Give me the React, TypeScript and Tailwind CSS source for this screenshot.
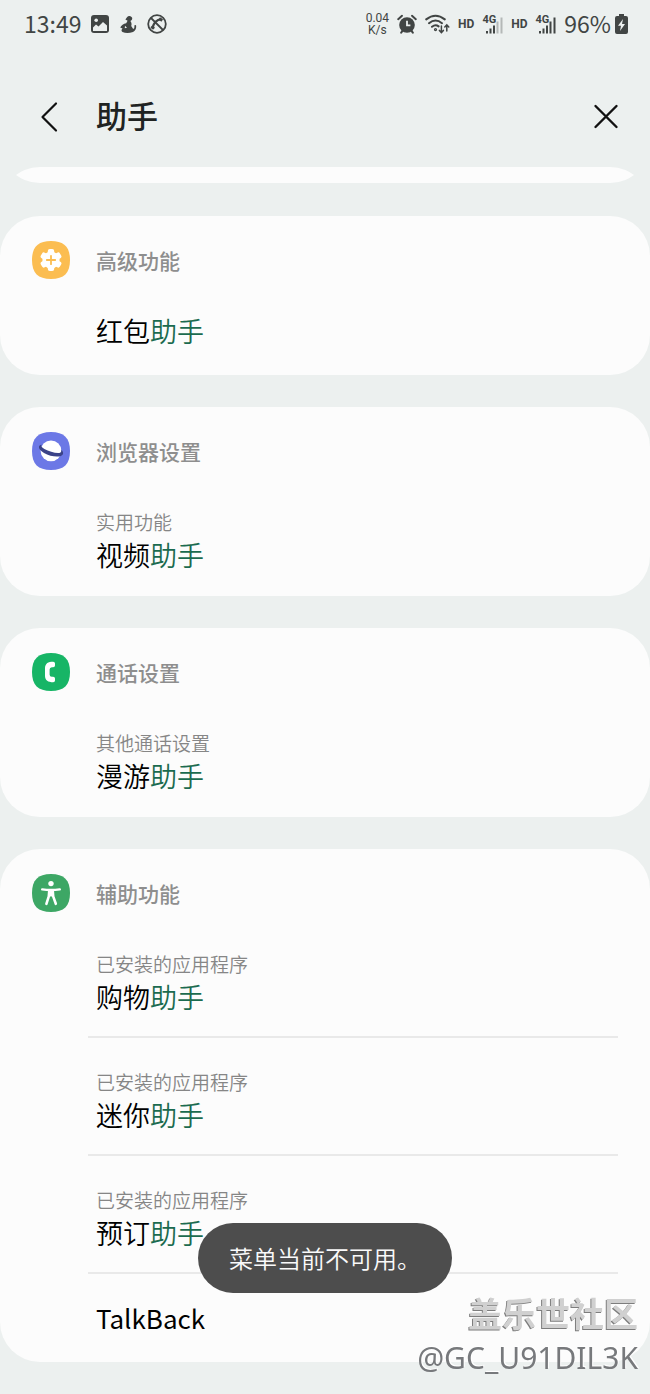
import React from 'react';

type Entry = {
  path?: string;
  name: string;
  match?: string;
};

type Section = {
  title: string;
  icon: React.ReactNode;
  entries: Entry[];
};

const tilePath =
  'M19 0C32 0 38 6 38 19S32 38 19 38S0 32 0 19S6 0 19 0Z';

const AdvancedIcon = () => (
  <svg viewBox="0 0 38 38" className="size-[38px] shrink-0" aria-hidden="true">
    <path d={tilePath} fill="#fbbd51" />
    <g fill="#fff">
      <circle cx="19" cy="19" r="8.6" />
      <rect x="15.8" y="8" width="6.4" height="22" rx="2" />
      <rect x="15.8" y="8" width="6.4" height="22" rx="2" transform="rotate(60 19 19)" />
      <rect x="15.8" y="8" width="6.4" height="22" rx="2" transform="rotate(120 19 19)" />
    </g>
    <path d="M19 14.8v8.4M14.8 19h8.4" stroke="#fbbd51" strokeWidth="1.8" strokeLinecap="round" />
  </svg>
);

const BrowserIcon = () => (
  <svg viewBox="0 0 38 38" className="size-[38px] shrink-0" aria-hidden="true">
    <path d={tilePath} fill="#6c78e6" />
    <circle cx="19" cy="18.8" r="10.4" fill="#fff" />
    <path
      d="M9.6 12.8C5.6 13.2 6 17.4 12 21C18.4 24.7 28 26 30.6 22.8C31.8 21.1 30.8 19.2 29.2 17.6C29.6 19.6 29.2 20.6 27.4 20.9C23.6 21.4 16.6 19.4 12.4 17C9.6 15.3 8.6 14 9.6 12.8Z"
      fill="#3b4388"
    />
  </svg>
);

const CallIcon = () => (
  <svg viewBox="0 0 38 38" className="size-[38px] shrink-0" aria-hidden="true">
    <path d={tilePath} fill="#17b566" />
    <path
      d="M19.4 8.8C14.6 9.2 13 12 13 15.4V22.6C13 26 14.6 28.8 19.4 29.2H21.2Q23 29.2 23 27.4V25.4Q23 23.7 21.2 23.7H19.8Q17.6 23.6 17.6 21.4V16.6Q17.6 14.4 19.8 14.3H21.2Q23 14.3 23 12.6V10.6Q23 8.8 21.2 8.8Z"
      fill="#fff"
    />
  </svg>
);

const AccessibilityIcon = () => (
  <svg viewBox="0 0 38 38" className="size-[38px] shrink-0" aria-hidden="true">
    <path d={tilePath} fill="#3da765" />
    <circle cx="19" cy="9.6" r="2.7" fill="#fff" />
    <g fill="none" stroke="#fff" strokeLinecap="round" strokeLinejoin="round">
      <path d="M10.2 15.4Q19 16.6 27.8 15.4" strokeWidth="2.4" />
      <path d="M17.2 17.4L16.8 22.4L14.4 29.8M20.8 17.4L21.2 22.4L23.8 29.8" strokeWidth="2.6" />
    </g>
    <path d="M16.2 16H21.8L22 23.4L19 22.2L16 23.4Z" fill="#fff" />
  </svg>
);

const sections: Section[] = [
  {
    title: '高级功能',
    icon: <AdvancedIcon />,
    entries: [{ name: '红包', match: '助手' }],
  },
  {
    title: '浏览器设置',
    icon: <BrowserIcon />,
    entries: [{ path: '实用功能', name: '视频', match: '助手' }],
  },
  {
    title: '通话设置',
    icon: <CallIcon />,
    entries: [{ path: '其他通话设置', name: '漫游', match: '助手' }],
  },
  {
    title: '辅助功能',
    icon: <AccessibilityIcon />,
    entries: [
      { path: '已安装的应用程序', name: '购物', match: '助手' },
      { path: '已安装的应用程序', name: '迷你', match: '助手' },
      { path: '已安装的应用程序', name: '预订', match: '助手' },
      { name: 'TalkBack' },
    ],
  },
];

const Signal: React.FC<{ weak?: boolean }> = ({ weak }) => (
  <div className="flex items-start">
    <span className="font-['Roboto',sans-serif] text-[11px] font-bold leading-[12px]">4G</span>
    <svg viewBox="0 0 17 20" className="-ml-2.5 h-5 w-[17px]" fill="#414544" aria-hidden="true">
      <rect x="0" y="17" width="2" height="2.5" />
      <rect x="3.5" y="14.5" width="2" height="5" />
      <rect x="7" y="11.5" width="2" height="8" />
      <rect x="10.5" y="7.5" width="2" height="12" fill={weak ? '#b4b8b7' : '#414544'} />
      <rect x="14.5" y="3.5" width="2" height="16" fill={weak ? '#b4b8b7' : '#414544'} />
    </svg>
  </div>
);

const StatusBar = () => (
  <div className="flex h-12 items-center justify-between pl-6 pr-[22px] text-[23px] leading-[26px] text-[#414544]">
    <div className="flex items-center gap-2.5">
      <span className="pb-0.5">13:49</span>
      <svg viewBox="0 0 18 18" className="size-[18px]" aria-hidden="true">
        <rect width="18" height="18" rx="3" fill="#414544" />
        <path d="M2 12.5L5 9.5L7.5 11.5L12 7L16 10.5V16H2Z" fill="#ecf0ef" />
        <circle cx="5.2" cy="5.2" r="1.8" fill="#ecf0ef" />
      </svg>
      <svg viewBox="0 0 18 18" className="size-[18px]" fill="#414544" aria-hidden="true">
        <path d="M8 2.2A3 3 0 0 1 13 2.5A2.8 2.8 0 0 1 11.4 6Q13.2 8 12.2 11L14.2 14Q16 13 15.2 10.5L17 10Q18 14.6 14 17Q8 18.8 3.5 17Q1.5 15.5 3.5 13.5L1.2 12.6Q3 9 7.2 8.2L8.6 5.8L6.4 4.4Z" />
        <path d="M6 10.8L8 12.8L5.8 13.2Z" fill="#ecf0ef" />
      </svg>
      <svg viewBox="0 0 20 20" className="size-5" fill="none" stroke="#414544" strokeWidth="1.8" aria-hidden="true">
        <circle cx="10" cy="10" r="8.8" />
        <path d="M4 4L16 16" />
        <path d="M14.5 5.2Q7 6 5.4 14.6" strokeWidth="2.2" />
        <path d="M12.2 4.4L15.2 6.6M4.4 12.2L7 14.8" strokeWidth="2.8" />
      </svg>
    </div>
    <div className="flex items-center gap-2">
      <div className="text-center font-['Roboto',sans-serif] text-[12px] leading-[12px]">
        <div>0.04</div>
        <div>K/s</div>
      </div>
      <svg viewBox="0 0 20 20" className="size-5" aria-hidden="true">
        <circle cx="10" cy="11" r="7.8" fill="#414544" />
        <path d="M1.2 5.2L5 1.8M18.8 5.2L15 1.8M4.2 18.6L5.8 16.4M15.8 18.6L14.2 16.4" stroke="#414544" strokeWidth="2" strokeLinecap="round" />
        <path d="M10 6.8V11.4H13.4" fill="none" stroke="#ecf0ef" strokeWidth="1.8" />
      </svg>
      <svg viewBox="0 0 25 20" className="h-5 w-[25px]" fill="none" stroke="#414544" strokeWidth="2" strokeLinecap="round" aria-hidden="true">
        <path d="M1.2 5.4Q10.5 -2 19.8 5.4M4 9.2Q10.5 3.8 17 9.2M7 12.8Q10.5 10 13.6 12.4" />
        <circle cx="10.5" cy="15.6" r=".6" />
        <path d="M16.4 12V18.2M14.4 16.4L16.4 18.6L18.4 16.4M21.8 17V11.2M19.8 13L21.8 10.8L23.8 13" strokeWidth="1.5" />
      </svg>
      <span className="font-['Roboto',sans-serif] text-[12px] font-bold">HD</span>
      <Signal weak />
      <span className="font-['Roboto',sans-serif] text-[12px] font-bold">HD</span>
      <Signal />
      <div className="flex items-center gap-1">
        <span className="pb-0.5">96%</span>
        <svg viewBox="0 0 13 20" className="h-5 w-[13px]" aria-hidden="true">
          <path d="M4 0H9V2H11Q13 2 13 4V18Q13 20 11 20H2Q0 20 0 18V4Q0 2 2 2H4Z" fill="#414544" />
          <path d="M8 5L3 11.8H6L5 17L10 10H7Z" fill="#ecf0ef" />
        </svg>
      </div>
    </div>
  </div>
);

const SearchHeader = () => (
  <header className="flex h-[119px] items-start pl-8 pr-6 pt-12">
    <button type="button" aria-label="返回" className="flex h-10 w-16 items-center">
      <svg viewBox="0 0 34 40" className="h-10 w-[34px]" fill="none" stroke="#111" strokeWidth="2.2" strokeLinecap="round" strokeLinejoin="round" aria-hidden="true">
        <path d="M24 7.5L10.5 21L24 34.5" />
      </svg>
    </button>
    <h1 className="grow text-[31px] font-medium leading-[38px] text-[#202322]">助手</h1>
    <button type="button" aria-label="关闭" className="flex size-10 items-center justify-center">
      <svg viewBox="0 0 40 40" className="size-10" fill="none" stroke="#111" strokeWidth="2.4" strokeLinecap="round" aria-hidden="true">
        <path d="M9.5 10L30.5 31M30.5 10L9.5 31" />
      </svg>
    </button>
  </header>
);

// tail of the card that is scrolled under the header:
// only the last pixels of its rounded corners stay in view
const ScrolledCard = () => (
  <div className="mb-px">
    <div className="h-2 overflow-hidden">
      <div className="h-20 rounded-[40px] bg-[#fcfcfc]"></div>
    </div>
    <div className="flex h-2 items-end overflow-hidden">
      <div className="h-20 w-full shrink-0 rounded-[40px] bg-[#fcfcfc]"></div>
    </div>
  </div>
);

const SectionCard: React.FC<{ section: Section }> = ({ section }) => (
  <section className="rounded-[40px] bg-[#fcfcfc]">
    <div className="flex items-center gap-[26px] pb-2 pl-8 pt-[25px]">
      {section.icon}
      <h2 className="text-[21px] font-medium leading-[36px] text-[#8e8e8e]">{section.title}</h2>
    </div>
    <ul className="ml-[88px] mr-8">
      {section.entries.map((entry, index) => (
        <li key={index} className="border-b-2 border-[#e9e9e9] last:border-b-0 last:pb-0.5">
          <a
            href="#"
            className={entry.path ? 'block pb-[19px] pl-2 pt-[31px]' : 'block pb-[22px] pl-2 pt-6'}
          >
            {entry.path && (
              <span className="block text-[19px] font-[350] leading-[26px] text-[#868686]">{entry.path}</span>
            )}
            <span
              className={
                entry.match
                  ? 'block text-[27px] font-[350] leading-[40px] text-black'
                  : 'block text-[26px] leading-[40px] text-black'
              }
            >
              {entry.name}
              {entry.match && <span className="text-[#1b6b4f]">{entry.match}</span>}
            </span>
          </a>
        </li>
      ))}
    </ul>
  </section>
);

const App: React.FC = () => {
  return (
    <div className="relative min-h-screen bg-[#ecf0ef] font-['Noto_Sans_CJK_SC',sans-serif]">
      <StatusBar />
      <SearchHeader />
      <main className="flex flex-col gap-8 pb-8">
        <ScrolledCard />
        {sections.map((section) => (
          <SectionCard key={section.title} section={section} />
        ))}
      </main>

      <div
        role="status"
        className="fixed bottom-[101px] left-1/2 -translate-x-1/2 whitespace-nowrap rounded-full bg-[#4d4d4d] px-[31px] py-4 text-[24px] font-[350] leading-[38px] text-[#fafafa]"
      >
        菜单当前不可用。
      </div>

      <div className="pointer-events-none absolute bottom-[14px] right-3 text-right">
        <p className="text-[34px] font-bold leading-[46px] text-[#d0d0d0] [text-shadow:-1px_1px_0_#7d7d7d]">
          盖乐世社区
        </p>
        <p className="font-['Noto_Sans',sans-serif] text-[30px] leading-[44px] text-[#77797c] [text-shadow:1px_-1px_0_#ffffff]">
          @GC_U91DIL3K
        </p>
      </div>
    </div>
  );
};

export default App;
